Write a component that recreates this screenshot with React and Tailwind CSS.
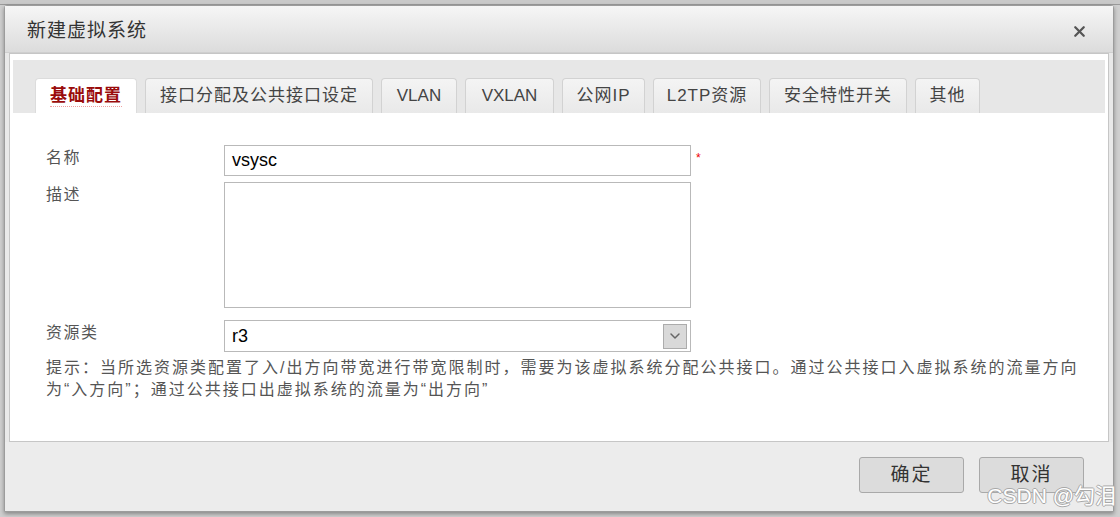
import { X, ChevronDown } from "lucide-react";

const tabs = [
  { label: "基础配置", w: "w-[102px]" },
  { label: "接口分配及公共接口设定", w: "w-[228px]" },
  { label: "VLAN", w: "w-[76px]", latin: true },
  { label: "VXLAN", w: "w-[89px]", latin: true },
  { label: "公网IP", w: "w-[83px]" },
  { label: "L2TP资源", w: "w-[108px]" },
  { label: "安全特性开关", w: "w-[138px]" },
  { label: "其他", w: "w-[65px]" },
];

const font = "font-['Liberation_Sans','Noto_Sans_CJK_SC',sans-serif]";

const App = () => {
  return (
    <div className={`w-[1120px] h-[517px] bg-[#cfcfcf] overflow-hidden relative ${font}`}>
      {/* page behind the dialog */}
      <div className="h-[5px] bg-[#c9c9c9] border-b border-[#9a9a9a]" />

      <div className="pl-[4px]">
        <div className="w-[1110px] h-[507px] border border-[#9c9c9c] rounded-t-[3px] bg-[#e9e9e9] shadow-[0_2px_4px_rgba(0,0,0,0.35)] flex flex-col">
          {/* header */}
          <div className="h-[47px] shrink-0 flex items-center justify-between pt-[4px] pl-[22px] pr-[25px] bg-gradient-to-b from-[#f6f6f6] to-[#dcdcdc] border-b border-[#cfcfcf]">
            <h2 className="text-[19px] tracking-[1px] text-[#333]">新建虚拟系统</h2>
            <X size={17} strokeWidth={3.2} className="text-[#555]" />
          </div>

          {/* body */}
          <div className="mx-[4px] h-[389px] shrink-0 bg-white border border-[#c6c6c6] pt-[6px] px-[3px]">
            <div className="h-[53px] bg-[#e7e7e7] flex items-end gap-[8px] pl-[22px]">
              {tabs.map((t, i) =>
                i === 0 ? (
                  <div
                    key={t.label}
                    className={`${t.w} h-[35px] bg-white rounded-t-[4px] border border-b-0 border-[#dcdcdc] flex items-center justify-center`}
                  >
                    <span className="text-[17px] tracking-[1px] font-bold text-[#9a0c0c] leading-[20px] border-b border-dotted border-[#f0a0a0]">
                      {t.label}
                    </span>
                  </div>
                ) : (
                  <div
                    key={t.label}
                    className={`${t.w} h-[35px] rounded-t-[4px] border border-b-0 border-[#d2d2d2] bg-gradient-to-b from-[#f4f4f4] to-[#e9e9e9] flex items-center justify-center text-[17px] text-[#444] ${
                      t.latin ? "" : "tracking-[1px]"
                    }`}
                  >
                    {t.label}
                  </div>
                )
              )}
            </div>

            <div className="pl-[33px] pt-[32px] text-[16px] text-[#555]">
              <div className="flex">
                <label className="w-[178px] pt-[1px] tracking-[1.5px]">名称</label>
                <div className="w-[467px] h-[31px] border border-[#b9b9b9] px-[7px] flex items-center text-[18px] text-black">
                  vsysc
                </div>
                <span className="text-[#e00] text-[12px] ml-[5px] mt-[4px]">*</span>
              </div>

              <div className="flex mt-[6px]">
                <label className="w-[178px] pt-[1px] tracking-[1.5px]">描述</label>
                <div className="w-[467px] h-[126px] border border-[#b9b9b9]" />
              </div>

              <div className="flex mt-[12px]">
                <label className="w-[178px] pt-[1px] tracking-[1.5px]">资源类</label>
                <div className="w-[467px] h-[32px] border border-[#b9b9b9] pl-[7px] pr-[3px] flex items-center justify-between text-[18px] text-black">
                  <span>r3</span>
                  <div className="w-[24px] h-[25px] bg-[#d9d9d9] border border-[#acacac] flex items-center justify-center">
                    <ChevronDown size={16} strokeWidth={2.2} className="text-[#666]" />
                  </div>
                </div>
              </div>

              <p className="mt-[5px] leading-[22px] pr-[20px] tracking-[2px]">
                提示：当所选资源类配置了入/出方向带宽进行带宽限制时，需要为该虚拟系统分配公共接口。通过公共接口入虚拟系统的流量方向为“入方向”；通过公共接口出虚拟系统的流量为“出方向”
              </p>
            </div>
          </div>

          {/* footer */}
          <div className="flex-1 bg-[#ececec] flex justify-end items-start pt-[15px] pr-[29px] gap-[15px]">
            <button className="w-[105px] h-[36px] bg-[#dcdcdc] border border-[#a9a9a9] rounded-[3px] text-[19px] tracking-[2px] text-[#333]">
              确定
            </button>
            <button className="w-[105px] h-[36px] bg-[#dcdcdc] border border-[#a9a9a9] rounded-[3px] text-[19px] tracking-[2px] text-[#333]">
              取消
            </button>
          </div>
        </div>
      </div>

      <span className="absolute right-[4px] bottom-[6px] text-[21px] text-white [text-shadow:1px_0_0_#a8a8a8,-1px_0_0_#a8a8a8,0_1px_0_#a8a8a8,0_-1px_0_#a8a8a8]">
        CSDN @勾泪
      </span>
    </div>
  );
};

export default App;
